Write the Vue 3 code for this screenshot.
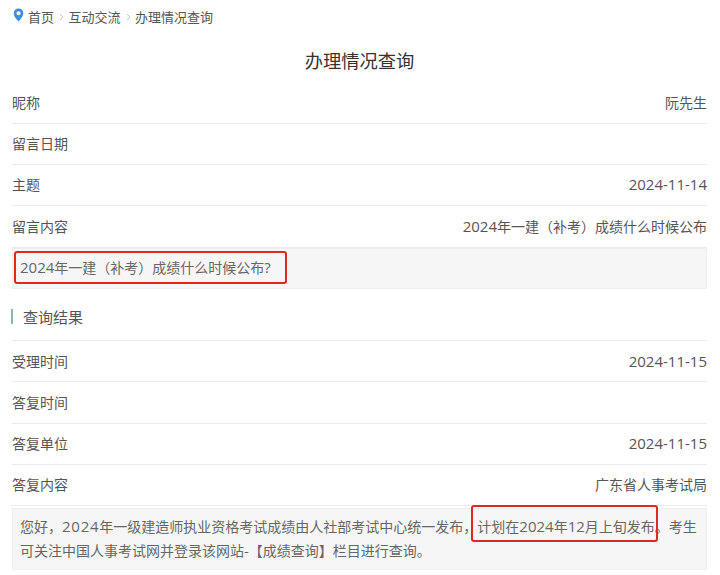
<script setup>
const top = [
  ['昵称', '阮先生'],
  ['留言日期', ''],
  ['主题', '2024-11-14'],
  ['留言内容', '2024年一建（补考）成绩什么时候公布']
]
const result = [
  ['受理时间', '2024-11-15'],
  ['答复时间', ''],
  ['答复单位', '2024-11-15'],
  ['答复内容', '广东省人事考试局']
]
</script>

<template>
  <div class="page">
    <nav class="crumbs">
      <svg class="pin" width="11" height="14" viewBox="0 0 12 16">
        <path fill-rule="evenodd" fill="#3f8fe0" d="M6 .5A5.5 5.5 0 0 0 .5 6C.5 9.6 4.3 13.6 6 15.5 7.7 13.6 11.5 9.6 11.5 6A5.5 5.5 0 0 0 6 .5ZM6 3.6A2.4 2.4 0 1 1 6 8.4 2.4 2.4 0 0 1 6 3.6Z" />
      </svg>
      <span>首页</span>
      <svg class="sep" width="5" height="8" viewBox="0 0 5 8"><path d="M1 1l3 3-3 3" fill="none" stroke="#c4c4c4" stroke-width="1" /></svg>
      <span>互动交流</span>
      <svg class="sep" width="5" height="8" viewBox="0 0 5 8"><path d="M1 1l3 3-3 3" fill="none" stroke="#c4c4c4" stroke-width="1" /></svg>
      <span>办理情况查询</span>
    </nav>
    <h1 class="title">办理情况查询</h1>

    <div class="row" v-for="r in top" :key="r[0]">
      <span>{{ r[0] }}</span>
      <span v-if="r[1].startsWith('2024-')" class="num">{{ r[1] }}</span>
      <span v-else-if="r[1].startsWith('2024')"><span class="num">2024</span>{{ r[1].slice(4) }}</span>
      <span v-else>{{ r[1] }}</span>
    </div>
    <div class="box single">
      <span class="mark"><span class="num">2024</span>年一建（补考）成绩什么时候公布<span class="num">?</span><i class="red red-a"></i></span>
    </div>

    <h2 class="section"><i class="bar"></i><span>查询结果</span></h2>

    <div class="row" v-for="r in result" :key="r[0]">
      <span>{{ r[0] }}</span>
      <span v-if="r[1].startsWith('2024-')" class="num">{{ r[1] }}</span>
      <span v-else>{{ r[1] }}</span>
    </div>
    <div class="box reply">
      您好，<span class="num wide">2024</span>年一级建造师执业资格考试成绩由人社部考试中心统一发布，<span class="mark">计划在<span class="num">2024</span>年<span class="num">12</span>月上旬发布<i class="red red-b"></i></span>。考生可关注中国人事考试网并登录该网站-【成绩查询】栏目进行查询。
    </div>
  </div>
</template>

<style>
html, body { margin: 0; background: #fff; }
</style>

<style scoped>
.page {
  width: 720px;
  height: 575px;
  overflow: hidden;
  box-sizing: border-box;
  padding: 0 13px 0 12px;
  font-family: "Noto Sans CJK SC", "Noto Sans", sans-serif;
  font-size: 14px;
  color: #555;
}
.num {
  font-family: "Open Sans", "Noto Sans", sans-serif;
  font-size: 15px;
}
.wide { letter-spacing: 0.75px; }
.crumbs {
  display: flex;
  align-items: center;
  height: 32px;
  padding-left: 1px;
  font-size: 13px;
  color: #555;
}
.pin { margin-right: 4px; margin-top: -2px; }
.sep { margin: 1px 4.5px 0 5px; }
.title {
  margin: 0;
  padding-top: 12px;
  height: 38.5px;
  font-size: 18.3px;
  font-weight: 400;
  line-height: 32px;
  text-align: center;
  color: #333;
}
.row {
  display: flex;
  justify-content: space-between;
  align-items: center;
  box-sizing: border-box;
  height: 41.3px;
  padding-bottom: 1.5px;
  border-bottom: 1px solid #ebebeb;
  line-height: 20px;
}
.box {
  box-sizing: border-box;
  background: #f6f6f6;
  border: 1px solid #eee;
  color: #666;
}
.single {
  height: 41px;
  line-height: 37px;
  padding-left: 7px;
}
.reply {
  margin-top: 1.5px;
  height: 62px;
  padding: 5px 7px;
  line-height: 24px;
}
.mark { position: relative; }
.red {
  position: absolute;
  border: 2px solid #dc2a20;
  border-radius: 3px;
  pointer-events: none;
}
.red-a { left: -6px; right: -16px; top: -6px; bottom: -7px; }
.red-b { left: -6px; right: -3px; top: -11px; bottom: -6px; }
.section {
  display: flex;
  align-items: center;
  margin: 0;
  height: 52.5px;
  padding-top: 5px;
  font-size: 15px;
  font-weight: 400;
  color: #555;
  border-bottom: 1px solid #ebebeb;
  box-sizing: border-box;
}
.bar {
  width: 2px;
  height: 15px;
  margin-right: 10px;
  margin-left: -1px;
  background: #8fb5b0;
}
</style>
